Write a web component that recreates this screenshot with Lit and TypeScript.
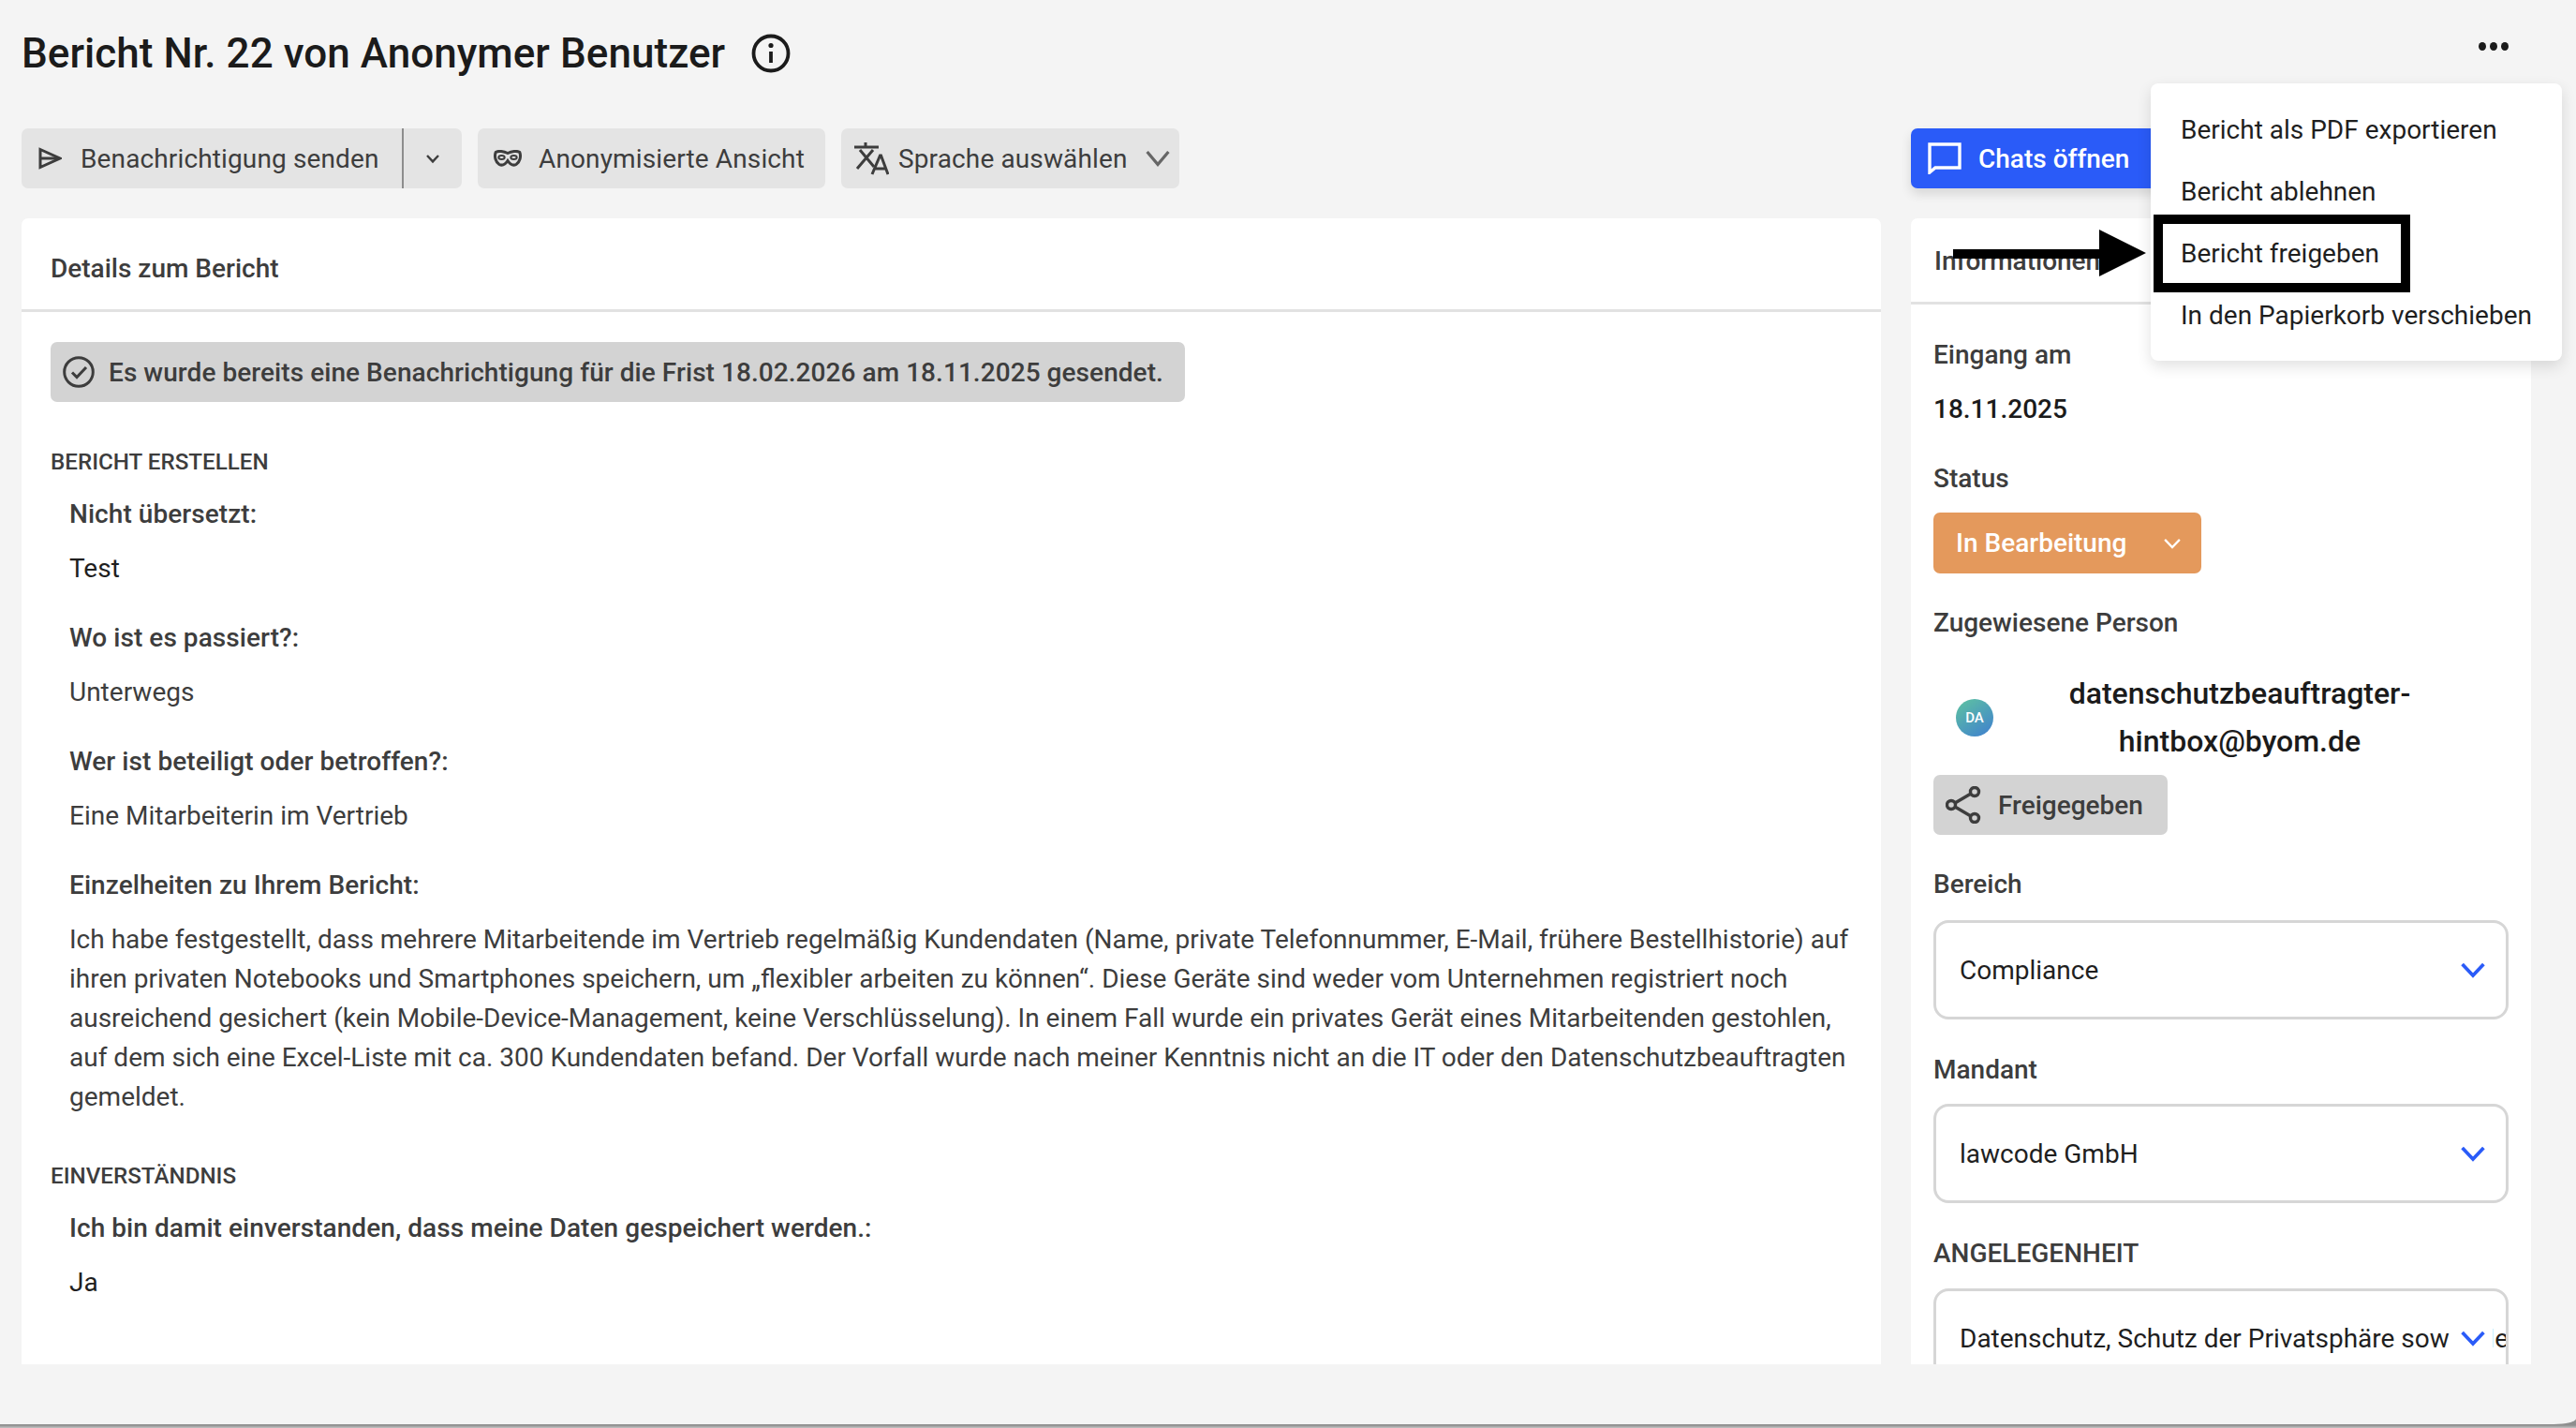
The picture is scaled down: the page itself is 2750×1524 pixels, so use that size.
import { LitElement, html, css } from "lit";
import { customElement } from "lit/decorators.js";

const chevron = () => html`<svg viewBox="0 0 24 24" fill="none" stroke="currentColor" stroke-width="3.4"><path d="M1.500 6.500L12 17.500 22.500 6.500"/></svg>`;

@customElement("app-root")
export class AppRoot extends LitElement {
  static styles = css`
    :host { display: block; width: 2750px; height: 1524px; overflow: hidden; position: relative; background: linear-gradient(#8e8e8e 0, #8e8e8e 1521px, #c4c4c4 1524px); font-family: Roboto, "Liberation Sans", sans-serif; font-size: 28px; color: #3d3d3d; box-sizing: border-box; }
    * { box-sizing: border-box; }
    svg { display: block; flex: none; }
    .page { height: 1520px; background: #f4f4f4; border-radius: 0 0 24px 0 / 0 0 6px 0; padding: 0 48px 0 23px; display: flex; flex-direction: column; }
    .titlebar { height: 137px; display: flex; align-items: flex-start; padding-top: 31px; }
    h1 { margin: 0; font-size: 44px; font-weight: 500; line-height: 52px; color: #1b1b1b; letter-spacing: .05px; }
    .info { width: 42px; height: 42px; margin-left: 28px; margin-top: 5px; color: #1b1b1b; }
    .dots { margin-left: auto; margin-right: 24px; display: flex; gap: 4px; margin-top: 14px; }
    .dots i { width: 8px; height: 9px; border-radius: 50%; background: #1b1b1b; }
    .toolbar { height: 64px; display: flex; gap: 17px; }
    .btn { height: 64px; border-radius: 7px; background: #e4e4e4; display: flex; align-items: center; color: #3d3d3d; white-space: nowrap; letter-spacing: .13px; }
    .split-wrap { display: flex; width: 470px; }
    .split-arrow { width: 64px; border-left: 2px solid #8d8d8d; justify-content: center; border-radius: 0 7px 7px 0; }
    .split-main { width: 406px; padding-left: 17px; gap: 20px; border-radius: 7px 0 0 7px; }
    .anon { width: 371px; padding-left: 17px; gap: 18px; }
    .lang { width: 361px; padding-left: 13px; gap: 10px; }
    .lang-chev { margin-left: 9px; color: #666; }
    .chats { margin-left: auto; width: 662px; background: #2a5bf8; color: #fff; padding-left: 18px; gap: 18px; font-weight: 500; letter-spacing: 0; box-shadow: 0 6px 12px rgba(0,0,0,.12); }
    .cols { margin-top: 32px; display: grid; grid-template-columns: 1985px 662px; column-gap: 32px; height: 1223px; }
    .card { background: #fff; border-radius: 7px 7px 0 0; overflow: hidden; }
    .card-head { font-weight: 500; border-bottom: 3px solid #e2e2e2; display: flex; align-items: center; }
    .left .card-head { height: 100px; padding-left: 31px; padding-top: 10px; }
    .right .card-head { height: 92px; padding-left: 25px; padding-top: 2px; }
    .left-body { padding: 32px 31px 0; }
    .alert { width: 1211px; height: 64px; border-radius: 7px; background: #d3d3d3; display: flex; align-items: center; padding-left: 13px; gap: 15px; font-weight: 500; letter-spacing: .06px; }
    h2 { margin: 48px 0 0; font-size: 24.2px; font-weight: 500; line-height: 32px; text-transform: uppercase; }
    h2.second { margin-top: 47px; }
    .item { padding-left: 20px; margin-top: 19px; }
    .item + .item { margin-top: 32px; }
    .q { font-weight: 500; line-height: 42px; letter-spacing: .06px; }
    .a { line-height: 42px; margin-top: 16px; color: #3d3d3d; }
    .a.long { margin-top: 16px; }
    .a.dark { color: #1f1f1f; }
    .right-body { padding: 0 24px; }
    .lab { font-weight: 500; line-height: 36px; }
    .l1 { margin-top: 36px; }
    .l2 { margin-top: 38px; }
    .l3 { margin-top: 35px; }
    .l4 { margin-top: 36px; }
    .date { font-weight: 500; color: #1b1b1b; line-height: 36px; margin-top: 22px; }
    .status { margin-top: 18px; width: 286px; height: 65px; background: #e4995c; border-radius: 7px; color: #fff; font-weight: 500; display: flex; align-items: center; padding-left: 24px; }
    .status svg { width: 18px; height: 18px; margin-left: auto; margin-right: 22px; stroke-width: 3; }
    .person { display: grid; grid-template-columns: 40px 1fr; align-items: center; margin-top: 32px; padding-left: 24px; }
    .avatar { width: 40px; height: 40px; border-radius: 50%; background: linear-gradient(145deg, #5fc4a0, #3f7fd0); color: #fff; font-size: 15px; font-weight: 500; display: flex; align-items: center; justify-content: center; }
    .pname { font-size: 32px; font-weight: 500; color: #1b1b1b; line-height: 51px; text-align: center; padding: 0 56px 0 32px; }
    .shared { margin-top: 10px; width: 250px; height: 64px; background: #d3d3d3; border-radius: 7px; display: flex; align-items: center; gap: 18px; padding-left: 13px; font-weight: 500; }
    .select { position: relative; height: 106px; width: 614px; border: 3px solid #d6d6d6; border-radius: 16px; display: flex; align-items: center; padding-left: 25px; color: #1f1f1f; overflow: hidden; white-space: nowrap; }
    .sm20 { margin-top: 20px; }
    .sm18 { margin-top: 18px; }
    .sm19 { margin-top: 19px; }
    .select svg { position: absolute; right: 22px; top: 37px; width: 26px; height: 26px; color: #2a5bf8; }
    .select.clip svg { background: #fff; box-sizing: content-box; padding: 0 8px 0 11px; right: 14px; }
    .overlay-menu { position: absolute; left: 2296px; top: 89px; width: 439px; height: 296px; background: #fff; border-radius: 8px; box-shadow: 0 6px 16px rgba(0,0,0,.12); padding: 17px 0 0 32px; color: #1f1f1f; z-index: 2; }
    .overlay-menu div { height: 66px; line-height: 66px; white-space: nowrap; }
    .box { position: absolute; left: 2299px; top: 229px; width: 274px; height: 83px; border: 10px solid #000; z-index: 3; }
    .arrow { position: absolute; left: 2085px; top: 245px; width: 206px; height: 50px; z-index: 3; }
  `;

  render() {
    return html`
      <div class="page">
        <div class="titlebar">
          <h1>Bericht Nr. 22 von Anonymer Benutzer</h1>
          <svg class="info" viewBox="0 0 42 42" fill="none" stroke="currentColor" stroke-width="3.800"><circle cx="21" cy="21" r="18.500"/><path d="M21 19v12"/><circle cx="21" cy="12.500" r="2.600" fill="currentColor" stroke="none"/></svg>
          <div class="dots"><i></i><i></i><i></i></div>
        </div>
        <div class="toolbar">
          <div class="split-wrap">
            <div class="btn split-main">
              <svg width="26" height="26" viewBox="0 0 26 26" fill="none" stroke="#3d3d3d" stroke-width="3"><path d="M3 3.500L24 13 3 22.500Z"/><path d="M3 13h20"/></svg>
              Benachrichtigung senden
            </div>
            <div class="btn split-arrow"><svg width="18" height="18" viewBox="0 0 24 24" fill="none" stroke="#3d3d3d" stroke-width="3.200"><path d="M4 8l8 8.500L20 8"/></svg></div>
          </div>
          <div class="btn anon">
            <svg width="30" height="18" viewBox="0 0 30 18" fill="none" stroke="#3d3d3d"><path stroke-width="3" d="M15 3.500C11 1.500 5 .5 2.200 2.500 .5 7 2 13 6 15.500c4 2 7-1 9-4 2 3 5 6 9 4 4-2.500 5.500-8.500 3.800-13C25 .5 19 1.500 15 3.500z"/><ellipse stroke-width="2" cx="8.500" cy="8" rx="3.200" ry="2"/><ellipse stroke-width="2" cx="21.500" cy="8" rx="3.200" ry="2"/></svg>
            Anonymisierte Ansicht
          </div>
          <div class="btn lang">
            <svg width="38" height="36" viewBox="0 0 38 36" fill="none" stroke="#3d3d3d" stroke-width="3"><path d="M1 6h26M13 1v5M7 9l15 18M21 9L4 29"/><path d="M20 35l8.500-20h1L37 35M23 29h11"/></svg>
            Sprache auswählen
            <svg class="lang-chev" width="26" height="26" viewBox="0 0 24 24" fill="none" stroke="currentColor" stroke-width="3"><path d="M1.500 5.500L12 18 22.500 5.500"/></svg>
          </div>
          <div class="btn chats">
            <svg width="36" height="34" viewBox="0 0 36 34" fill="none" stroke="#fff" stroke-width="3.400"><path d="M2 2h32v25H8l-6 5z"/></svg>
            Chats öffnen
          </div>
        </div>
        <div class="cols">
          <section class="card left">
            <div class="card-head">Details zum Bericht</div>
            <div class="left-body">
              <div class="alert">
                <svg width="34" height="34" viewBox="0 0 34 34" fill="none" stroke="#3d3d3d" stroke-width="3"><circle cx="17" cy="17" r="15.300"/><path d="M10 17.500l5 5L25 12"/></svg>
                Es wurde bereits eine Benachrichtigung für die Frist 18.02.2026 am 18.11.2025 gesendet.
              </div>
              <h2>Bericht erstellen</h2>
              <div class="item"><div class="q">Nicht übersetzt:</div><div class="a dark">Test</div></div>
              <div class="item"><div class="q">Wo ist es passiert?:</div><div class="a">Unterwegs</div></div>
              <div class="item"><div class="q">Wer ist beteiligt oder betroffen?:</div><div class="a">Eine Mitarbeiterin im Vertrieb</div></div>
              <div class="item"><div class="q">Einzelheiten zu Ihrem Bericht:</div><div class="a long">Ich habe festgestellt, dass mehrere Mitarbeitende im Vertrieb regelmäßig Kundendaten (Name, private Telefonnummer, E-Mail, frühere Bestellhistorie) auf ihren privaten Notebooks und Smartphones speichern, um „flexibler arbeiten zu können“. Diese Geräte sind weder vom Unternehmen registriert noch ausreichend gesichert (kein Mobile-Device-Management, keine Verschlüsselung). In einem Fall wurde ein privates Gerät eines Mitarbeitenden gestohlen, auf dem sich eine Excel-Liste mit ca. 300 Kundendaten befand. Der Vorfall wurde nach meiner Kenntnis nicht an die IT oder den Datenschutzbeauftragten gemeldet.</div></div>
              <h2 class="second">Einverständnis</h2>
              <div class="item"><div class="q">Ich bin damit einverstanden, dass meine Daten gespeichert werden.:</div><div class="a dark">Ja</div></div>
            </div>
          </section>
          <section class="card right">
            <div class="card-head">Informationen</div>
            <div class="right-body">
              <div class="lab l1">Eingang am</div>
              <div class="date">18.11.2025</div>
              <div class="lab l2">Status</div>
              <div class="status">In Bearbeitung${chevron()}</div>
              <div class="lab l3">Zugewiesene Person</div>
              <div class="person">
                <div class="avatar">DA</div>
                <div class="pname">datenschutzbeauftragter-hintbox@byom.de</div>
              </div>
              <div class="shared">
                <svg width="38" height="40" viewBox="0 0 38 40" fill="none" stroke="#3d3d3d" stroke-width="3.400"><circle cx="6" cy="20" r="4.500"/><circle cx="31" cy="6" r="4.500"/><circle cx="31" cy="34" r="4.500"/><path d="M10 18L27 8M10 22l17 10"/></svg>
                Freigegeben
              </div>
              <div class="lab l3">Bereich</div>
              <div class="select sm20">Compliance${chevron()}</div>
              <div class="lab l4">Mandant</div>
              <div class="select sm18">lawcode GmbH${chevron()}</div>
              <div class="lab l4">ANGELEGENHEIT</div>
              <div class="select clip sm19">Datenschutz, Schutz der Privatsphäre sowie Netz- und Informationssicherheit${chevron()}</div>
            </div>
          </section>
        </div>
      </div>
      <div class="overlay-menu">
        <div>Bericht als PDF exportieren</div>
        <div>Bericht ablehnen</div>
        <div>Bericht freigeben</div>
        <div>In den Papierkorb verschieben</div>
      </div>
      <div class="box"></div>
      <svg class="arrow" viewBox="0 0 206 50"><path d="M0 21h156V0l50 25-50 25V31H0z" fill="#000"/></svg>
    `;
  }
}
